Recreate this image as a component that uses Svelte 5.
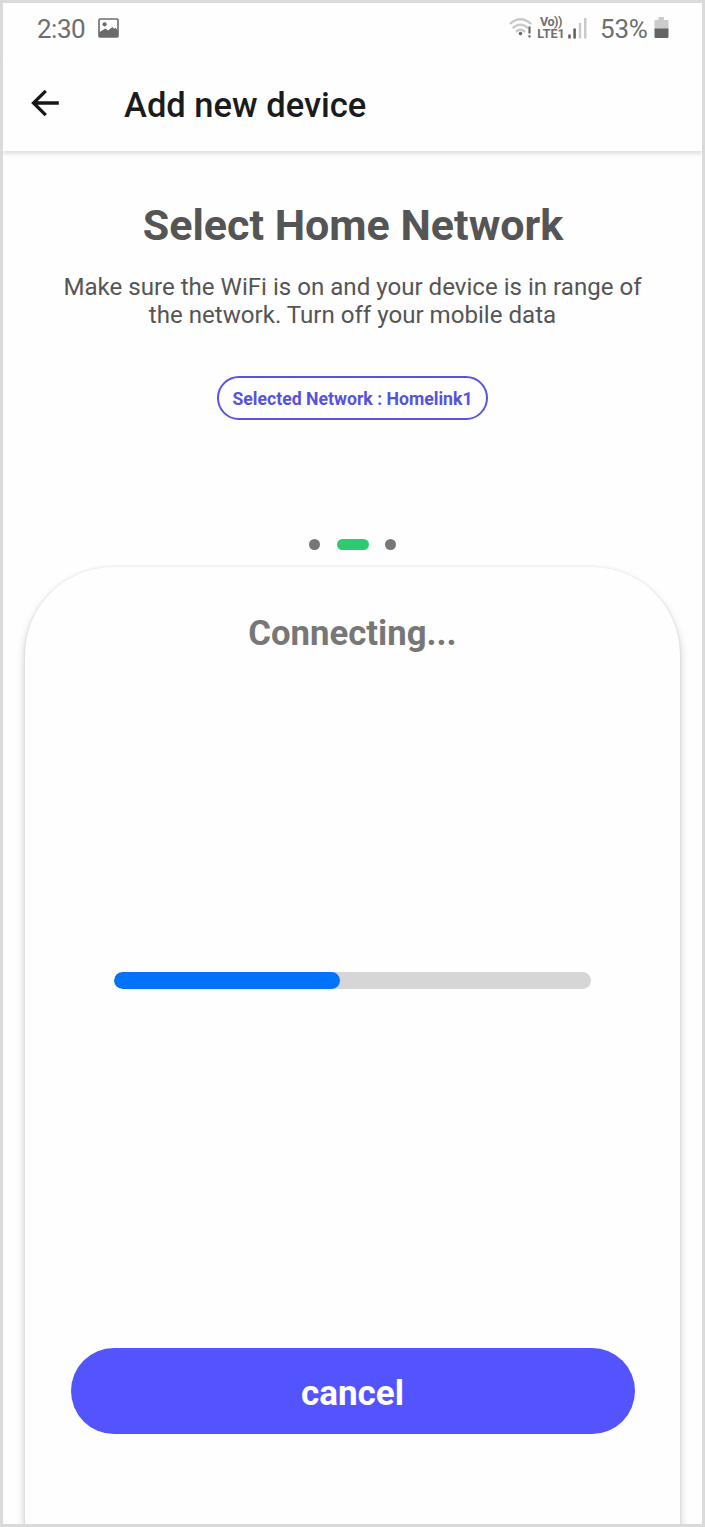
<script>
  const progress = 47.4;
  const network = 'Homelink1';
</script>

<div class="screen">
  <div class="status">
    <span class="time">2:30</span>
    <svg class="photo" width="21" height="20" viewBox="0 0 21 20">
      <rect x="1" y="1" width="19" height="18" rx="1" fill="none" stroke="#6b6b6b" stroke-width="1.6" />
      <circle cx="6.6" cy="6.3" r="2.1" fill="#6b6b6b" />
      <path d="M1 14.5L4.5 12.2L7.5 10.5L10 12.5L14.5 9L16 10.8L17.5 9.8L20 12.5V19H1Z" fill="#6b6b6b" />
    </svg>
    <svg class="wifi" width="24" height="22" viewBox="0 0 24 22">
      <g fill="none" stroke="#c9c9c9" stroke-width="2.3">
        <path d="M0.8 6Q11.5-3.4 22.2 6" />
        <path d="M3.6 10.2Q11.5 3 19 10.2" />
        <path d="M7 13.8Q11.5 9.6 16 13.8" />
      </g>
      <circle cx="11.5" cy="15.6" r="1.8" fill="#6b6b6b" />
      <path d="M20.5 8.5V15.6M20.5 17.2V19.5" stroke="#6b6b6b" stroke-width="2.2" />
    </svg>
    <div class="volte"><span class="vo">Vo))</span><span>LTE1</span></div>
    <svg class="signal" width="19" height="21" viewBox="0 0 19 21">
      <path d="M1.5 16.5V20.5M6.6 10.5V20.5" stroke="#5d5d5d" stroke-width="2.5" />
      <path d="M12 5V20.5M17.2 0V20.5" stroke="#cacaca" stroke-width="2.5" />
    </svg>
    <span class="percent">53%</span>
    <svg class="battery" width="15" height="22" viewBox="0 0 15 22">
      <path d="M4.5 0H10V3H13.5Q14.5 3 14.5 4V12H0.5V4Q0.5 3 1.5 3H4.5Z" fill="#cbcbcb" />
      <path d="M0.5 11.5H14.5V20Q14.5 21 13.5 21H1.5Q0.5 21 0.5 20Z" fill="#646464" />
    </svg>
  </div>

  <header>
    <svg width="28" height="28" viewBox="0 0 28 28" fill="none" stroke="#171719" stroke-width="3.3">
      <path d="M27.8 14H3M14.8 1.8L2.5 14L14.8 26.2" />
    </svg>
    <h1>Add new device</h1>
  </header>

  <main>
    <h2>Select Home Network</h2>
    <p>Make sure the WiFi is on and your device is in range of<br />the network. Turn off your mobile data</p>
    <div class="chip"><span>Selected Network : {network}</span></div>
    <div class="pager"><i></i><i class="active"></i><i></i></div>
    <section class="sheet">
      <h3>Connecting...</h3>
      <div class="track"><div class="bar" style="width: {progress}%"></div></div>
      <button>cancel</button>
    </section>
  </main>
</div>

<style>
  * { box-sizing: border-box; }
  :global(body) { margin: 0; background: #fff; }
  .screen {
    width: 705px; height: 1527px; border: 3px solid #dadada; background: #fefefe;
    display: flex; flex-direction: column; overflow: hidden;
    font-family: Roboto, sans-serif; white-space: nowrap;
  }
  .status { height: 54px; flex: none; display: flex; align-items: flex-start; padding: 11px 0 0 34px; color: #6e6e6e; }
  .time, .percent { font-size: 26px; line-height: 30px; letter-spacing: -0.5px; }
  .time { width: 48px; }
  .photo { margin: 4px 0 0 13px; }
  .wifi { margin: 4px 0 0 390px; }
  .volte { display: flex; flex-direction: column; align-items: center; width: 28px; margin: 2px 0 0 4px; font-size: 12.6px; line-height: 12px; font-weight: 700; color: #707070; }
  .vo { letter-spacing: -0.5px; }
  .signal { margin: 4px 0 0 3px; }
  .percent { margin-left: 13px; width: 48px; letter-spacing: -0.2px; }
  .battery { margin: 3px 0 0 6px; }
  header {
    height: 94px; flex: none; display: flex; align-items: center; padding: 0 0 0 28px;
    box-shadow: 0 3px 4px rgba(0, 0, 0, 0.12); position: relative; background: #fefefe;
  }
  header svg { margin-top: -2px; }
  h1 { margin: 1px 0 0 65px; font-size: 34.5px; line-height: 40px; font-weight: 500; color: #1b1b1d; }
  main { flex: 1; display: flex; flex-direction: column; align-items: center; padding: 49px 0 0; }
  h2 { margin: 0; font-size: 43px; line-height: 50px; font-weight: 700; color: #555; padding-left: 1px; }
  p { margin: 23px 0 0; font-size: 24.1px; line-height: 28px; text-align: center; color: #555; }
  .chip {
    margin-top: 47px; width: 271px; height: 44px; border: 2px solid #5855dc; border-radius: 22px; flex: none;
    display: flex; align-items: center; justify-content: center; padding-top: 2px;
    font-size: 17.65px; font-weight: 700; color: #5553db;
  }
  .pager { margin-top: 118px; display: flex; align-items: center; gap: 16.5px; height: 12px; }
  .pager i { width: 11px; height: 11px; border-radius: 50%; background: #777; }
  .pager .active { width: 32px; border-radius: 6px; background: #2dcb70; }
  .sheet {
    margin-top: 17px; width: 655px; height: 1100px; flex: none; border-radius: 88px 88px 0 0; background: #fefefe;
    box-shadow: 0 5px 10px rgba(0, 0, 0, 0.2), 0 0 3px rgba(0, 0, 0, 0.1);
    display: flex; flex-direction: column; align-items: center;
  }
  h3 { margin: 45px 0 0; font-size: 34.7px; line-height: 42px; font-weight: 700; color: #777; }
  .track { margin-top: 318px; width: 477px; height: 17px; border-radius: 9px; background: #d6d6d6; flex: none; overflow: hidden; }
  .bar { height: 17px; border-radius: 9px; background: #0073f8; }
  button {
    margin-top: 359px; width: 564px; height: 86px; flex: none; border: 0; border-radius: 43px;
    background: #5454ff; color: #fff; font: 700 35px/42px Roboto, sans-serif; padding: 5px 0 0;
  }
</style>
